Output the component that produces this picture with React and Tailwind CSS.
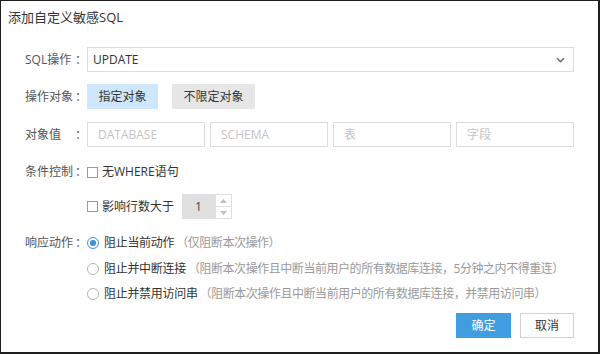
import React from "react";

const font = { fontFamily: '"Open Sans","Noto Sans CJK SC",sans-serif' };

function Label({ text }) {
  return (
    <div className="w-[62px] shrink-0 flex text-[12px] text-[#555] whitespace-nowrap">
      <span className="w-[50px]">{text}</span>
      <span>：</span>
    </div>
  );
}

function Checkbox() {
  return <span className="w-[11px] h-[11px] border border-[#9a9a9a] bg-white inline-block shrink-0" />;
}

function Radio({ checked }) {
  return (
    <span
      className={
        "w-[12px] h-[12px] rounded-full border inline-flex items-center justify-center shrink-0 bg-white " +
        (checked ? "border-[#3d8fe0]" : "border-[#b5b5b5]")
      }
    >
      {checked && <span className="w-[6px] h-[6px] rounded-full bg-[#3d8fe0]" />}
    </span>
  );
}

function RadioRow({ checked, main, note, mt }) {
  return (
    <div className={"h-[20px] flex items-center " + mt}>
      <div className="w-[62px] shrink-0" />
      <div className="flex items-center gap-[5px] text-[12px] whitespace-nowrap">
        <Radio checked={checked} />
        <span className="text-[#333] tracking-[-0.3px]">{main}</span>
        <span className="text-[#999] -ml-[3px] tracking-[-0.45px]">{note}</span>
      </div>
    </div>
  );
}

export default function App() {
  return (
    <div
      style={font}
      className="w-[600px] h-[354px] bg-white border-t border-l border-r-2 border-b-2 border-[#1e1e1e] box-border overflow-hidden"
    >
      <div className="h-[33px] flex items-center pl-[7px] text-[13px] text-[#333]">添加自定义敏感SQL</div>
      <div className="pl-[24px] pr-[24px]">
        <div className="mt-[13px] flex items-center">
          <Label text="SQL操作" />
          <div className="flex-1 h-[25px] border border-[#dcdcdc] flex items-center justify-between pl-[5px] pr-[8px] text-[12px] text-[#333]">
            <span>UPDATE</span>
            <svg width="9" height="6" viewBox="0 0 9 6">
              <path d="M1 1.2 L4.5 4.6 L8 1.2" fill="none" stroke="#6b7380" strokeWidth="1.5" />
            </svg>
          </div>
        </div>
        <div className="mt-[12px] flex items-center">
          <Label text="操作对象" />
          <div className="flex gap-[14px] text-[12px] text-[#333]">
            <div className="w-[71px] h-[25px] bg-[#cfe7fc] flex items-center justify-center">指定对象</div>
            <div className="w-[83px] h-[25px] bg-[#e6e6e6] flex items-center justify-center">不限定对象</div>
          </div>
        </div>
        <div className="mt-[13px] flex items-center">
          <Label text="对象值" />
          <div className="flex-1 grid grid-cols-4 gap-[5px] text-[12px] text-[#c4c4c4]">
            {["DATABASE", "SCHEMA", "表", "字段"].map((t) => (
              <div key={t} className="h-[25px] border border-[#dcdcdc] flex items-center pl-[10px]">
                {t}
              </div>
            ))}
          </div>
        </div>
        <div className="mt-[15px] h-[20px] flex items-center">
          <Label text="条件控制" />
          <div className="flex items-center gap-[4px] text-[12px] text-[#333]">
            <Checkbox />
            <span>无WHERE语句</span>
          </div>
        </div>
        <div className="mt-[12px] flex items-center">
          <div className="w-[62px] shrink-0" />
          <div className="flex items-center gap-[4px] text-[12px] text-[#333]">
            <Checkbox />
            <span>影响行数大于</span>
          </div>
          <div className="ml-[8px] h-[25px] w-[50px] flex">
            <div className="w-[33px] bg-[#e0e0e0] flex items-center justify-center text-[12px] text-[#444]">1</div>
            <div className="w-[17px] border border-[#e0e0e0] flex flex-col">
              <div className="flex-1 flex items-center justify-center border-b border-[#e0e0e0]">
                <svg width="7" height="4" viewBox="0 0 7 4"><path d="M0 4 L3.5 0 L7 4 Z" fill="#c0c0c0" /></svg>
              </div>
              <div className="flex-1 flex items-center justify-center">
                <svg width="7" height="4" viewBox="0 0 7 4"><path d="M0 0 L3.5 4 L7 0 Z" fill="#c0c0c0" /></svg>
              </div>
            </div>
          </div>
        </div>
        <div className="mt-[14px] h-[20px] flex items-center">
          <Label text="响应动作" />
          <div className="flex items-center gap-[5px] text-[12px] whitespace-nowrap">
            <Radio checked />
            <span className="text-[#333] tracking-[-0.3px]">阻止当前动作</span>
            <span className="text-[#999] -ml-[3px] tracking-[-0.45px]">（仅阻断本次操作）</span>
          </div>
        </div>
        <RadioRow mt="mt-[6px]" main="阻止并中断连接" note="（阻断本次操作且中断当前用户的所有数据库连接，5分钟之内不得重连）" />
        <RadioRow mt="mt-[5px]" main="阻止并禁用访问串" note="（阻断本次操作且中断当前用户的所有数据库连接，并禁用访问串）" />
        <div className="mt-[9px] flex justify-end gap-[9px] text-[12px]">
          <div className="w-[55px] h-[25px] bg-[#409ee0] text-white flex items-center justify-center">确定</div>
          <div className="w-[54px] h-[25px] border border-[#d0d0d0] text-[#333] flex items-center justify-center">取消</div>
        </div>
      </div>
    </div>
  );
}
